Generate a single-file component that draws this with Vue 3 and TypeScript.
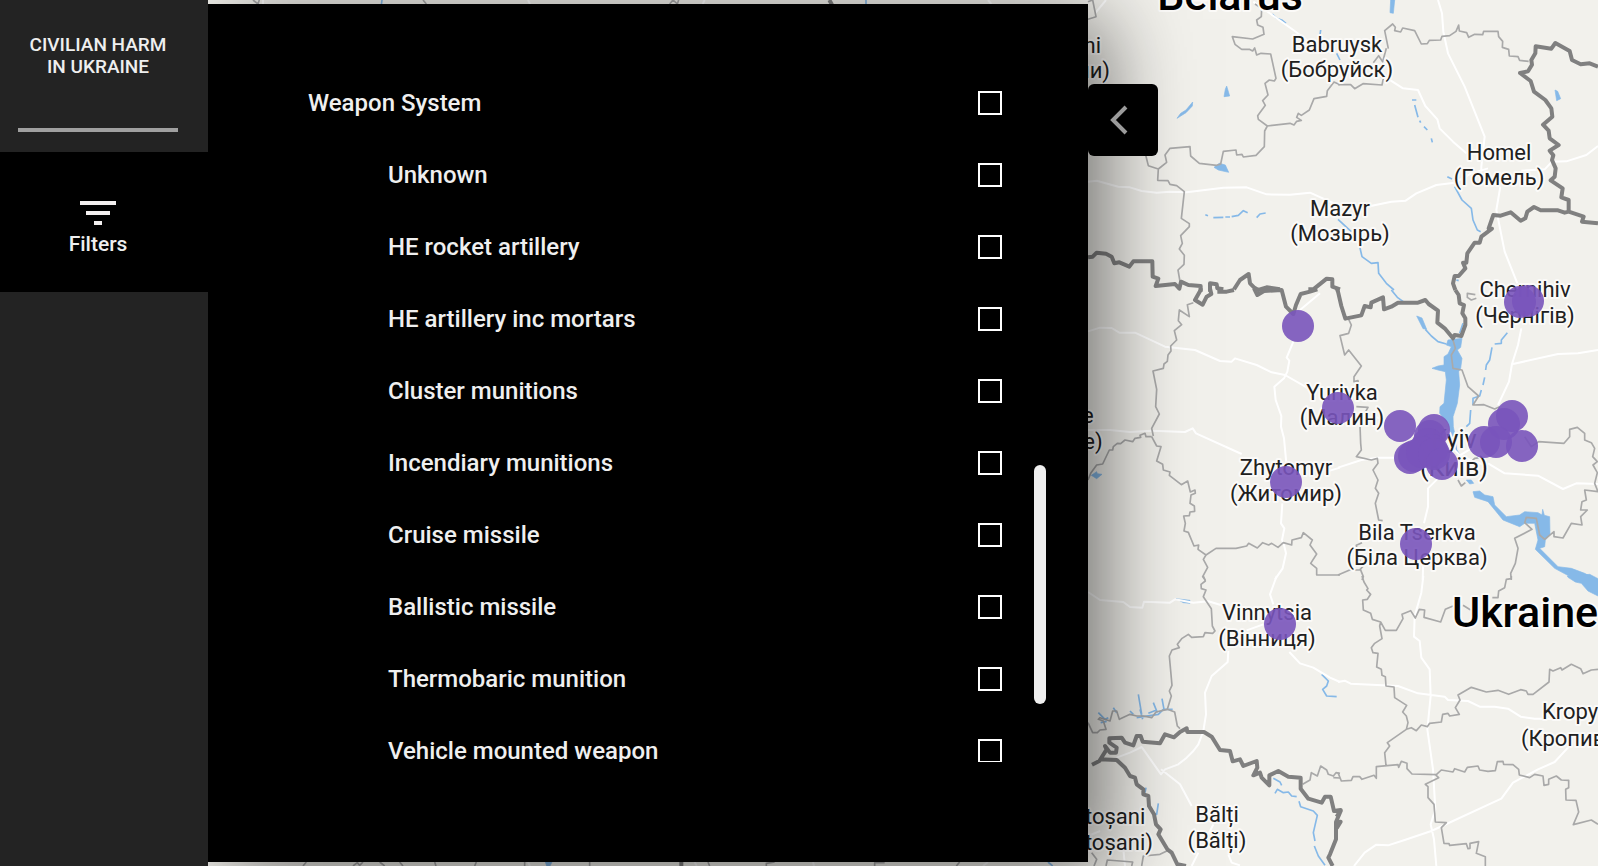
<script setup lang="ts">
import { ref } from 'vue'

interface Weapon {
  id: string
  name: string
  group?: boolean
}

interface Tile {
  x: number
  y: number
  lakes: string
  rivers: string
  roads: string
  regions: string
  borders: string
}

interface Place {
  x: number
  y: number
  gap: number
  lines: string[]
  anchor?: 'start' | 'end'
  size?: 'city' | 'country'
}

const weapons: Weapon[] = [
  { id: 'weapon-system', name: 'Weapon System', group: true },
  { id: 'unknown', name: 'Unknown' },
  { id: 'he-rocket', name: 'HE rocket artillery' },
  { id: 'he-mortar', name: 'HE artillery inc mortars' },
  { id: 'cluster', name: 'Cluster munitions' },
  { id: 'incendiary', name: 'Incendiary munitions' },
  { id: 'cruise', name: 'Cruise missile' },
  { id: 'ballistic', name: 'Ballistic missile' },
  { id: 'thermobaric', name: 'Thermobaric munition' },
  { id: 'vehicle', name: 'Vehicle mounted weapon' },
]

const selected = ref<string[]>([])

// Tile geometry is stored at three units per map pixel.
const tiles: Tile[] = [
  {
    x: 1080,
    y: 0,
    lakes: 'M436 268L440 258 449 288 432 290ZM402 502L418 490 436 495 446 517 415 510ZM291 355L302 340 318 330 338 306 337 318 318 338Z',
    rivers: 'M376 644L384 647M400 653L430 652M436 651L450 651M455 650L475 646 490 632 503 638M530 653L540 642 557 639M577 42L590 55 605 60 618 70M722 90L720 105M770 160L780 180',
    roads: 'M24 545L50 542 115 560 150 562 185 573 230 578 270 575 320 577 430 563 500 562 560 583 630 584 690 578 750 605 780 618M520 5L640 90 680 120M45 40L78 0',
    regions: 'M24 5L38 0 48 50 24 58M525 12L545 25 544 50 530 60 533 75 549 82 552 103 518 117 457 110 465 133 485 148 508 148 518 153 524 144 530 165 543 160 572 162 588 235 583 243 568 240 555 250 564 285 548 302 556 316 533 347 535 358 562 378 554 393 553 440 528 466 490 471 486 463 470 465 468 450 430 454 422 492 410 496 358 490 332 468 330 440 270 445 255 465 260 487 235 507 205 497 197 465M235 507L233 541 264 542 270 553 290 557 313 575 304 655 328 671 328 680 302 707 307 730 298 747 313 766 312 793 294 810 300 845M562 378L630 370 642 375 650 364 664 361 650 352 655 340 664 346 688 330 702 296 740 289 742 272 762 246 780 254',
    borders: 'M24 772L38 770 50 758 78 761 95 770 103 790 118 787 148 800 160 784 217 784 218 830 235 836 227 858 285 852 298 866 303 845 325 855 362 858 362 875M390 875L390 850 410 853 412 865 430 868M462 868L480 840 506 822 510 850 522 862 535 870 560 862 600 868M685 868L700 868 740 836 757 838 757 860 780 868',
  },
  {
    x: 1338,
    y: 0,
    lakes: 'M158 0L170 0 166 40 156 38ZM651 270L659 274 668 296 656 302Z',
    rivers: 'M222 300L235 300M230 315L240 352M245 362L248 368M258 380L268 390M280 415L283 427M328 530L342 537M350 560L372 600 400 625 405 660 418 690 428 695M0 658L40 695M64 735L72 770 100 790 120 788 122 820 145 850 168 870M355 840L362 842',
    roads: 'M300 0L312 40 316 95 330 160 380 260 440 410 430 500 430 515M140 230L195 265 240 270 262 318 298 358 305 385 345 425 385 460M80 622L160 605 203 602 235 580 295 555 350 548 400 520 450 505M550 512L620 508 642 485 685 484 745 465 780 438M487 560L475 630 500 755 538 850',
    regions: 'M0 254L38 254 50 266 75 251 132 255 136 236 128 230M106 188L122 167 134 185 145 145M151 146L140 92 164 72 172 82 170 92 188 96 194 84 230 92 250 132 268 131 274 121 308 120 312 109 335 107 354 94 362 75 364 93 386 98 392 112 410 103 434 104 437 94 480 94 482 110 494 124 493 142 512 148 514 168 540 170 545 181 572 184',
    borders: 'M780 200L755 190 728 193 702 180 695 153 652 129 640 146 593 139 592 160 580 180 582 194 570 214 546 219 578 243 588 275 622 300 640 325 643 350 615 374 632 392 635 415 662 435 635 452 646 466 642 480 653 505 650 530 638 541 674 565 670 592 692 600 692 635M780 670L732 665 737 650 692 635 680 638 660 631 608 631 588 621 568 635 562 655 548 662 518 637 488 647 466 645 452 685 462 686 430 710 425 728 410 728 388 760 385 788 375 788 382 805 362 828 350 828 345 850 352 870',
  },
  {
    x: 1080,
    y: 290,
    lakes: 'M34 556L50 545 52 551 66 553 50 566Z',
    rivers: '',
    roads: 'M24 124L60 113 95 114 118 128 165 128 255 170 345 180 420 213 455 215 465 205 530 225 575 247 615 255 685 295M720 10L660 60M640 155L620 203 628 212 622 245 612 265 583 290 587 330 604 378 603 410 612 445 620 530M24 420L90 420 150 426 215 422 315 426 338 415 348 430 485 492M607 640L603 700 613 715 606 750 612 765 618 790 608 835 585 868M740 545L780 533',
    regions: 'M340 38L322 44 328 80 298 60 295 92 305 104 283 122 290 150 272 168 273 183 264 195 262 214 252 222 250 235 219 243 230 298 227 350 238 372 215 415 220 438M215 440L198 440 195 430 180 436 182 442 165 445 158 455 135 450 122 461 112 460 100 470 98 480 88 480 68 522 50 525 32 550 24 570M215 440L230 468 243 470 230 513 248 523 250 540 270 546 268 556 304 584 323 573 331 606 345 600 346 610 333 615 330 640 343 648 344 664 330 666 328 677 311 678 316 700 312 723 325 727 342 768 356 765 354 778 378 795 408 775 468 775 500 768 506 760 532 774 548 758 566 765 575 760 594 772 610 758 635 765 636 750 664 743 670 728 697 750 690 765 710 792 692 820 710 835 710 855 780 855M378 795L370 808 383 832 368 860 376 870',
    borders: 'M362 -5L362 0 345 30 368 44 380 20 394 12 390 -5M412 5L440 5 462 0M522 -5L532 15 552 3 605 0 618 50 640 72 648 45 662 12 690 5 712 -2',
  },
  {
    x: 1338,
    y: 290,
    lakes: 'M330 150L372 145 368 172 358 180 372 205 368 235 362 245 365 285 358 340 345 380 346 410 352 440 342 440 330 400 305 370 306 350 318 340 325 270 322 245 300 240 282 235 300 228 318 225 318 200 330 192 340 170 325 165ZM236 78L252 84 266 118 255 116ZM405 605L425 603 440 615 465 620 470 645 505 680 545 675 560 665 600 668 612 675 614 658 619 676 635 680 636 735 622 750 620 770 605 775 660 830 700 835 740 850 785 875 715 870 650 835 592 778 600 750 590 700 560 700 545 710 495 690 450 635 410 622ZM385 570L400 570 407 580 395 582Z',
    rivers: 'M262 118L280 138 300 155 325 162M160 0L178 22 200 38M508 128L490 150 490 160 470 162M462 172L455 210 445 225 443 240M440 262L435 285M430 300L425 318 405 325 405 345M398 360L395 400 385 410M352 440L355 480 365 495M375 100L365 130',
    roads: 'M0 533L70 510 120 503 175 503M780 180L720 190 660 192 525 222M550 115L540 165 522 222 513 275 480 345M450 520L500 550 600 557 675 597 715 580 780 582M300 565L270 595 270 650 258 700M256 810L254 870M360 500L395 478M110 380L140 390M340 470L370 500 440 525',
    regions: 'M32 88L40 105 32 130 6 137 20 195 32 180 70 228 48 260 48 275 60 272 62 290 48 300 62 318M55 350L90 352 80 370 65 380 68 460 70 480 55 500 100 510 118 505 120 520 105 540 120 570 112 595 122 610 112 640 122 690 134 692M345 150L352 175 340 195 345 235 372 240 390 290 422 318 405 345 438 344 470 357 485 350M560 440L580 470 602 455 678 460 695 440 695 418 718 412 740 430 740 450 760 458 770 475 764 500 778 515 765 525 778 548 770 580 780 605 740 600 745 630 732 635 728 660 748 660 728 680 732 705 700 700 675 744 648 740 648 725 620 748 605 735 595 685 565 682 560 698 582 718 530 745 540 775 532 820 518 850 520 870M360 570L370 588 382 578M372 510L400 515 410 505 430 502 428 510M412 14L388 10 388 22 400 30 415 25M72 758L55 766 60 800 74 830 65 840 35 840 0 855M66 835L76 860 72 870',
    borders: 'M-4 -5L0 5 10 48 22 86 70 76 80 48 98 52 100 38 135 22 138 58 160 50 180 38 240 38 262 30 272 42 300 62 298 98 320 115 345 145 350 135 370 138 382 105 382 85 373 70 378 45 365 40 362 15 352 0',
  },
  {
    x: 1080,
    y: 576,
    lakes: 'M288 68L330 73 330 82 310 80Z',
    rivers: 'M725 295L745 315 740 330 728 340 740 360 770 362M580 607L600 618 605 628M585 652L592 640 610 650 625 648 635 660 650 662M657 676L662 692 700 705 712 718 700 770 705 795M703 810L715 840 735 868M175 355L185 415M220 380L232 410M246 368L252 400M55 410L75 430 85 425M100 395L110 410M150 405L160 415M170 425L235 415 250 400 278 400M198 635L195 650M235 682L230 715 218 712M62 440L80 436M180 400L188 430M205 412L230 402',
    roads: 'M24 48L60 72 130 78 150 93 187 95 192 77 270 80 285 70 340 80 385 76 440 92M590 0L570 55 580 85M550 145L500 163M445 225L443 258 395 300 375 350 378 415 370 465 355 505 340 525 320 545 295 565 255 580 243 595 190 520 185 513 150 530 110 545M243 580L300 625 335 690M628 228L660 262 700 275 750 305 780 318M400 745L385 775M355 830L335 870M445 835L455 860 480 868M24 780L60 765M130 820L135 870',
    regions: 'M370 0L376 15 363 25 364 38 378 42 370 62 394 98 397 150 405 165 398 172 375 170 370 182 335 184 325 175 305 188 292 205 298 215 276 222 268 240 276 328 268 345 274 360 262 400 284 408 292 450 300 458M24 440L38 470 52 470 60 462 78 460 70 435 55 430 60 425 90 435 98 405 110 405 118 430 150 415 170 420 190 420 215 425 228 408 262 400M35 830L50 850 42 870M78 870L82 852 158 858 155 870M185 870L190 840 240 835 262 824M668 625L690 612 694 590 712 600 722 570 740 582 745 595 760 600 768 590 780 592M760 605L780 606',
    borders: 'M36 566L58 555 80 520 75 510 90 530 108 530 110 515 88 500 88 487 125 485 135 500 160 508 170 480 182 480 188 497 240 502 255 475 282 484 300 468 320 457 322 468 372 468 395 482 420 522 450 525 458 556 480 550 490 570 530 555 532 575 520 598 540 590 545 605 568 628 568 598 595 585 625 602 662 605 662 638 685 668 725 680 735 662 752 662 762 705 782 705 768 738 768 790 750 835 745 845 758 870M58 550L110 552 135 575 150 600 165 605 170 625 190 640 190 655 205 660 207 690 222 715 228 745 242 760 235 775 262 820 275 830 292 865 318 870',
  },
  {
    x: 1338,
    y: 576,
    lakes: 'M688 0L690 4 712 18 730 22 750 45 784 62 784 10 755 -5Z',
    rivers: '',
    roads: 'M256 0L250 50 230 120 228 182 245 195 250 245 275 280 278 360 268 460 285 580 292 700 278 745 288 790 295 870M0 318L20 314 38 323 180 330 240 352 320 362 330 372 390 375 425 392 470 392 510 398 548 422 590 428 640 428M48 870L80 830 115 806 150 808 200 792 280 765 490 668 525 620 600 580 650 558 690 515',
    regions: 'M72 0L78 18 90 38 86 42 98 55 88 70 74 72 76 102 98 112 103 130 128 138 142 163 175 163 195 128 192 115 218 104 232 126 244 100 260 102 258 124 308 138 322 100 345 90M375 88L398 102M430 95L445 98M463 65L480 65 482 45 500 35 505 10 520 8 520 0M128 138L125 150 132 188 110 202 100 215 105 230 120 232 116 273 130 280 132 298 142 302 144 330 168 333 170 365 206 388 194 408 205 420 210 440 205 460 148 500 155 510 140 530 144 568M205 460L220 455 235 464 250 447 268 452 275 442 310 438 314 415 330 412 335 420 364 415 352 395 366 372 360 357 400 334 445 348 480 343 512 355 548 341 565 345 570 355 585 355 633 318 635 280 645 285 668 275 672 282 700 265 728 278 735 293 760 282 780 280M0 590L10 615 40 613 45 602 65 602 72 610 108 598 115 607 115 572 180 566 182 574 190 556 207 562 207 578 222 594 295 596 310 582 345 588 350 578 380 588 388 574 420 570 425 582 450 586 472 584 478 557 495 556 497 565 525 566 542 580 544 597 575 605 590 595 615 600 618 628 632 625 632 610 655 600 670 612 692 613 692 635 683 640 684 672 714 673 722 708 706 746 760 732 780 745M292 596L302 605 262 625 270 632 270 665 288 685 292 738 325 740 310 755 318 802 333 803 335 808 385 803 390 818 396 817 396 802 422 797 415 832 442 842 442 870',
    borders: 'M-8 704L8 702 -4 722M-4 738L8 737 -4 757',
  },
  {
    x: 208,
    y: 0,
    lakes: '',
    rivers: 'M522 0L520 15M1974 0L1974 12',
    roads: 'M165 0L165 12M960 0L966 12M1490 0L1484 12M2340 0L2350 12',
    regions: 'M135 0L150 12 154 0M645 0L655 12M1385 12L1395 0 1408 12 1412 0',
    borders: 'M1864 0L1872 14',
  },
  {
    x: 208,
    y: 860,
    lakes: 'M1012 6L1032 6 1026 18 1016 18Z',
    rivers: 'M2520 6L2534 18',
    roads: 'M960 6L966 18M1460 6L1466 18M1815 6L1818 18M2340 6L2325 18',
    regions: 'M295 6L285 18M435 18L448 8 455 16 465 6M515 6L530 18M575 6L585 18M680 6L684 18M805 6L800 18M950 6L950 18M1145 6L1145 18M1500 6L1505 18M1675 18L1675 10 1700 6M2000 18L2000 8 2030 8M2255 6L2245 18',
    borders: 'M1420 4L1420 18',
  },
]

const places: Place[] = [
  { x: 1230, y: 10, gap: 0, lines: ['Belarus'], size: 'country' },
  { x: 1452, y: 627, gap: 0, lines: ['Ukraine'], size: 'country', anchor: 'start' },
  { x: 1337, y: 52, gap: 25, lines: ['Babruysk', '(Бобруйск)'] },
  { x: 1499, y: 160, gap: 25, lines: ['Homel', '(Гомель)'] },
  { x: 1340, y: 216, gap: 25, lines: ['Mazyr', '(Мозырь)'] },
  { x: 1525, y: 297, gap: 26, lines: ['Chernihiv', '(Чернігів)'] },
  { x: 1342, y: 400, gap: 25, lines: ['Yurivka', '(Малин)'] },
  { x: 1286, y: 475, gap: 26, lines: ['Zhytomyr', '(Житомир)'] },
  { x: 1454, y: 448, gap: 28, lines: ['Kyiv', '(Київ)'], size: 'city' },
  { x: 1417, y: 540, gap: 25, lines: ['Bila Tserkva', '(Біла Церква)'] },
  { x: 1267, y: 620, gap: 26, lines: ['Vinnytsia', '(Вінниця)'] },
  { x: 1217, y: 822, gap: 26, lines: ['Bălți', '(Bălți)'] },
  { x: 1102, y: 824, gap: 26, lines: ['Botoșani', '(Botoșani)'] },
  { x: 1067, y: 423, gap: 26, lines: ['Rivne', '(Рівне)'] },
  { x: 1101, y: 53, gap: 0, lines: ['ni'], anchor: 'end' },
  { x: 1110, y: 78, gap: 0, lines: ['чни)'], anchor: 'end' },
  { x: 1542, y: 719, gap: 0, lines: ['Kropyvnytskyi'], anchor: 'start' },
  { x: 1521, y: 746, gap: 0, lines: ['(Кропивницький)'], anchor: 'start' },
]

const incidents: [number, number][] = [
  [1298, 326], [1338, 408], [1286, 482], [1280, 624], [1416, 544],
  [1520, 302], [1528, 301], [1400, 426],
  [1434, 430], [1430, 436], [1428, 444], [1432, 450], [1410, 458],
  [1414, 456], [1422, 452], [1434, 454], [1442, 464],
  [1512, 416], [1504, 424], [1484, 442], [1496, 442], [1522, 446],
]
</script>

<template>
  <div class="shell">
    <svg class="map" role="img" aria-label="Incident map">
      <g v-for="(tile, i) in tiles" :key="i" :transform="`translate(${tile.x} ${tile.y}) scale(${1 / 3})`">
        <path class="lake" :d="tile.lakes" />
        <path class="river" :d="tile.rivers" />
        <path class="road" :d="tile.roads" />
        <path class="region" :d="tile.regions" />
        <path class="border" :d="tile.borders" />
      </g>
      <g v-for="place in places" :key="place.lines[0]" class="place" :class="[place.size, place.anchor]">
        <text v-for="(line, n) in place.lines" :key="n" :x="place.x" :y="place.y + n * place.gap">{{ line }}</text>
      </g>
      <circle v-for="([x, y], i) in incidents" :key="i" class="incident" :cx="x" :cy="y" r="16" />
    </svg>

    <aside class="sidebar">
      <header class="brand">
        <h1 class="title">Civilian Harm<br />in Ukraine</h1>
        <hr class="rule" />
      </header>
      <button type="button" class="tab">
        <svg class="tab-icon" width="36" height="24" viewBox="0 0 36 24" aria-hidden="true">
          <path d="M0 0H36V4H0ZM6 10H30V14H6ZM14 20H22V24H14Z" fill="#f3f0f0" />
        </svg>
        Filters
      </button>
    </aside>

    <main class="panel">
      <ul class="options">
        <li v-for="weapon in weapons" :key="weapon.id">
          <label class="option" :class="{ child: !weapon.group }">
            <span>{{ weapon.name }}</span>
            <input v-model="selected" class="box" type="checkbox" :value="weapon.id" />
          </label>
        </li>
      </ul>
      <div class="track"><div class="thumb"></div></div>
    </main>

    <button type="button" class="collapse" aria-label="Collapse filters">
      <svg width="20" height="30" viewBox="0 0 20 30" aria-hidden="true">
        <path d="M17 2L4 15 17 28" fill="none" stroke="#9b9b9b" stroke-width="4" />
      </svg>
    </button>
  </div>
</template>

<style>
body {
  margin: 0;
}
</style>

<style scoped>
.shell {
  position: relative;
  display: flex;
  height: 100vh;
  overflow: hidden;
  background: #f2f1ec;
  color: #efefef;
  font-family: Roboto, "Liberation Sans", sans-serif;
  font-weight: 500;
}

.map {
  position: absolute;
  inset: 0;
  width: 100%;
  height: 100%;
}

.lake {
  fill: #86b9e8;
  stroke: #86b9e8;
  stroke-width: 2;
}

.river,
.road,
.region,
.border {
  fill: none;
  stroke-linejoin: round;
}

.river {
  stroke: #86b9e8;
  stroke-width: 5;
}

.road {
  stroke: #fff;
  stroke-width: 6;
}

.region {
  stroke: #a9a9a9;
  stroke-width: 5;
}

.border {
  stroke: #808080;
  stroke-width: 12;
}

.place {
  fill: #202020;
  stroke: #fbfaf8;
  stroke-width: 4px;
  stroke-linejoin: round;
  paint-order: stroke;
  text-anchor: middle;
  font-size: 22px;
  font-weight: 400;
}

.place.start {
  text-anchor: start;
}

.place.end {
  text-anchor: end;
}

.place.city {
  font-size: 25px;
}

.place.country {
  fill: #000;
  font-size: 43px;
  font-weight: 500;
}

.incident {
  fill: #7954bb;
  fill-opacity: 0.9;
}

.sidebar {
  position: relative;
  z-index: 2;
  flex: 0 0 208px;
  background: #232323;
}

.brand {
  box-sizing: border-box;
  height: 152px;
  padding: 34px 30px 0 18px;
}

.title {
  margin: 0;
  font-size: 19px;
  font-weight: 500;
  line-height: 22px;
  text-align: center;
  text-transform: uppercase;
  white-space: nowrap;
}

.rule {
  height: 4px;
  margin: 50px 0 0;
  border: 0;
  background: #a0a0a0;
}

.tab {
  display: flex;
  flex-direction: column;
  align-items: center;
  gap: 7px;
  width: 100%;
  height: 140px;
  padding: 49px 12px 0 0;
  border: 0;
  background: #000;
  color: inherit;
  font: inherit;
  font-size: 21px;
  line-height: 24px;
}

.tab-icon {
  flex: none;
}

.panel {
  position: relative;
  z-index: 1;
  display: flex;
  flex: 0 1 880px;
  gap: 32px;
  box-sizing: border-box;
  margin: 4px 0;
  padding: 63px 42px 100px 100px;
  background: #000;
  box-shadow: 18px 15px 80px rgba(0, 0, 0, 0.55);
}

.options {
  flex: 1;
  margin: 0;
  padding: 0;
  overflow-y: auto;
  list-style: none;
  scrollbar-width: none;
}

.option {
  display: flex;
  align-items: center;
  justify-content: space-between;
  height: 72px;
  font-size: 24px;
  line-height: 32px;
}

.option.child {
  padding-left: 80px;
}

.box {
  box-sizing: border-box;
  flex: none;
  width: 24px;
  height: 24px;
  margin: 0;
  border: 2px solid #fff;
  border-radius: 0;
  appearance: none;
  background: #000;
}

.box:checked {
  background: #fff;
}

.track {
  flex: 0 0 12px;
  padding-top: 398px;
}

.thumb {
  height: 239px;
  border-radius: 6px;
  background: #efefef;
}

.collapse {
  position: relative;
  z-index: 1;
  display: flex;
  flex: none;
  align-items: center;
  justify-content: center;
  width: 70px;
  height: 72px;
  margin-top: 84px;
  padding: 0 8px 0 0;
  border: 0;
  border-radius: 6px;
  background: #000;
}
</style>
